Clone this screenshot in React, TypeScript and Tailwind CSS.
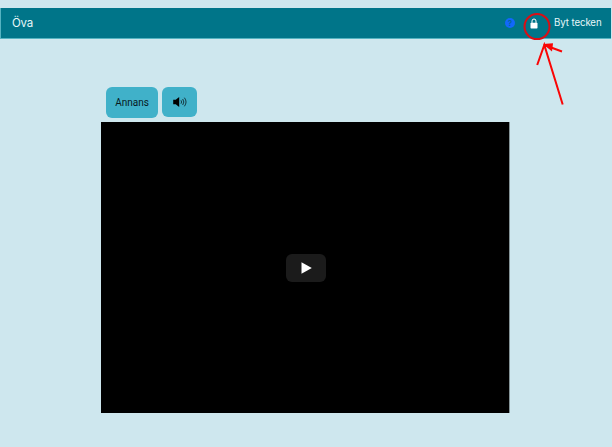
export default function App() {
  return (
    <div className="relative h-[447px] w-[612px] overflow-hidden bg-[#cee7ee] pt-2 font-['Roboto','Liberation_Sans',sans-serif]">
      <header className="flex h-[31px] w-[611px] items-center border-b border-l border-[#55b3c1] bg-[#007589] pl-[11px] pr-[9px] font-['Inter','Liberation_Sans',sans-serif] text-[#e8f7f9]">
        <h1 className="pt-px text-[11.5px] leading-none font-normal tracking-[-0.2px]">Öva</h1>
        <span className="ml-auto flex h-[10px] w-[10px] items-center justify-center rounded-full bg-[#1268fb] text-[8px] leading-none font-semibold text-[#00659c]">?</span>
        <svg className="ml-[15px] h-[11px] w-2" viewBox="0 0 8 11" fill="none">
          <path d="M2 5.5V3a2 2 0 0 1 4 0v2.5" stroke="white" strokeWidth="1" />
          <rect x="0.5" y="4.7" width="7" height="5.8" rx="0.7" fill="white" />
        </svg>
        <span className="ml-4 w-[48px] whitespace-nowrap text-[9.7px] leading-none font-normal tracking-[-0.1px]">Byt tecken</span>
      </header>

      <main className="ml-[101px] mt-12 w-[409px]">
        <div className="ml-[5px] flex gap-1">
          <button className="h-[31px] w-[52px] rounded-[6px] bg-[#40b1c9] text-[10px] text-[#07191e]">Annans</button>
          <button className="flex h-[30px] w-[35px] items-center justify-center rounded-[6px] bg-[#40b1c9]" aria-label="Ljud">
            <svg className="h-[10px] w-[14px]" viewBox="0 0 14 10" fill="none">
              <path d="M0.2 2.8h2.5L6.2 0v10L2.7 7.2H0.2z" fill="black" />
              <path d="M8 3.3q1.2 1.7 0 3.4M9.7 2q2.3 3 0 6M11.4 0.7q3.3 4.3 0 8.6" stroke="#10292f" strokeWidth="0.9" />
            </svg>
          </button>
        </div>
        <div className="mt-[4px] flex h-[291px] items-center justify-center border-r border-[#859498] bg-black pl-px">
          <button className="flex h-7 w-10 items-center justify-center rounded-[6px] bg-[#1b1b1b] pl-px" aria-label="Spela">
            <svg className="h-3 w-[11px]" viewBox="0 0 11 12"><path d="M0.5 0.2L10.8 6L0.5 11.8z" fill="white" /></svg>
          </button>
        </div>
      </main>

      <svg className="pointer-events-none absolute left-[515px] top-2 h-[105px] w-[65px]" viewBox="515 8 65 105" fill="none" stroke="#dc0d14" strokeWidth="2">
        <circle cx="537" cy="26.6" r="12.5" />
        <g stroke="#fa0505">
          <path d="M562.7 104.5L544.3 45L537.2 65M544.3 45L562 51.5" />
          <path d="M543 44L553 43.3L552 51.5z" fill="#fa0505" stroke="none" />
        </g>
      </svg>
    </div>
  );
}
